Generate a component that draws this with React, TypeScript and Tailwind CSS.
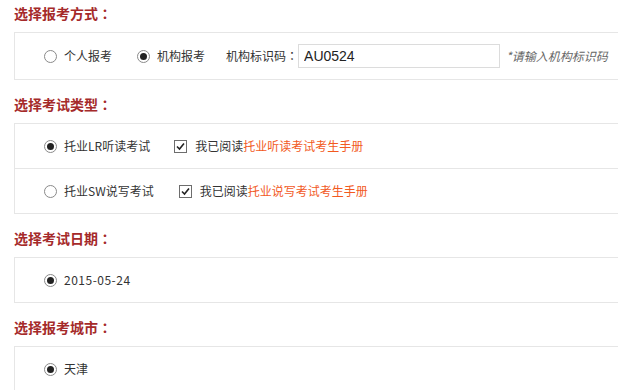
import React from "react";

const font = { fontFamily: '"Noto Sans CJK SC", "Noto Sans", sans-serif' };
const tcFont = { fontFamily: '"Noto Sans CJK TC", "Noto Sans CJK SC", sans-serif' };

function Colon() {
  return <span style={tcFont}>：</span>;
}

function Radio({ checked }: { checked?: boolean }) {
  return (
    <span className="inline-flex w-[13px] h-[13px] shrink-0 items-center justify-center rounded-full border border-[#8a8a8a] bg-white">
      {checked && <span className="block w-[7px] h-[7px] rounded-full bg-[#222]" />}
    </span>
  );
}

function Check() {
  return (
    <span className="inline-flex w-[13px] h-[13px] shrink-0 items-center justify-center border border-[#6d6d6d] bg-white">
      <svg width="9" height="9" viewBox="0 0 9 9">
        <path d="M1 4.5 L3.5 7 L8 1.5" fill="none" stroke="#222" strokeWidth="1.6" />
      </svg>
    </span>
  );
}

function Heading({ children, first }: { children: React.ReactNode; first?: boolean }) {
  return (
    <div
      className={`${first ? "" : "mt-[11px]"} mb-[6px] h-[26px] leading-[26px] pl-[14px] text-[14px] font-bold text-[#a52a2a]`}
    >
      {children}
      <Colon />
    </div>
  );
}

export default function App() {
  return (
    <div className="w-[618px] h-[390px] overflow-hidden bg-white text-[12px] text-[#333]" style={font}>
      <Heading first>选择报考方式</Heading>
      <div className="ml-[14px] w-[640px] border border-[#e6e6e6]">
        <div className="h-[46px] flex items-center pl-[29px]">
          <Radio />
          <span className="ml-[7px]">个人报考</span>
          <span className="ml-[25px] inline-flex"><Radio checked /></span>
          <span className="ml-[7px]">机构报考</span>
          <span className="ml-[21px]">机构标识码<Colon /></span>
          <input
            readOnly
            value="AU0524"
            className="w-[202px] h-[24px] border border-[#dcdcdc] px-[5px] text-[14px] text-[#222] outline-none"
            style={{ fontFamily: '"Liberation Sans", Arial, sans-serif' }}
          />
          <span className="ml-[6px] italic text-[#666]">*请输入机构标识码</span>
        </div>
      </div>

      <Heading>选择考试类型</Heading>
      <div className="ml-[14px] w-[640px] border border-[#e6e6e6]">
        <div className="h-[45px] flex items-center pl-[29px] border-b border-[#e6e6e6]">
          <Radio checked />
          <span className="ml-[7px]">托业LR听读考试</span>
          <span className="ml-[24px] inline-flex"><Check /></span>
          <span className="ml-[8px]">我已阅读<span className="text-[#f25a1e]">托业听读考试考生手册</span></span>
        </div>
        <div className="h-[44px] flex items-center pl-[29px]">
          <Radio />
          <span className="ml-[7px]">托业SW说写考试</span>
          <span className="ml-[25px] inline-flex"><Check /></span>
          <span className="ml-[8px]">我已阅读<span className="text-[#f25a1e]">托业说写考试考生手册</span></span>
        </div>
      </div>

      <Heading>选择考试日期</Heading>
      <div className="ml-[14px] w-[640px] border border-[#e6e6e6]">
        <div className="h-[44px] flex items-center pl-[29px]">
          <Radio checked />
          <span className="ml-[7px] tracking-[0.5px]">2015-05-24</span>
        </div>
      </div>

      <Heading>选择报考城市</Heading>
      <div className="ml-[14px] w-[640px] border border-[#e6e6e6]">
        <div className="h-[44px] flex items-center pl-[29px]">
          <Radio checked />
          <span className="ml-[7px]">天津</span>
        </div>
      </div>
    </div>
  );
}
